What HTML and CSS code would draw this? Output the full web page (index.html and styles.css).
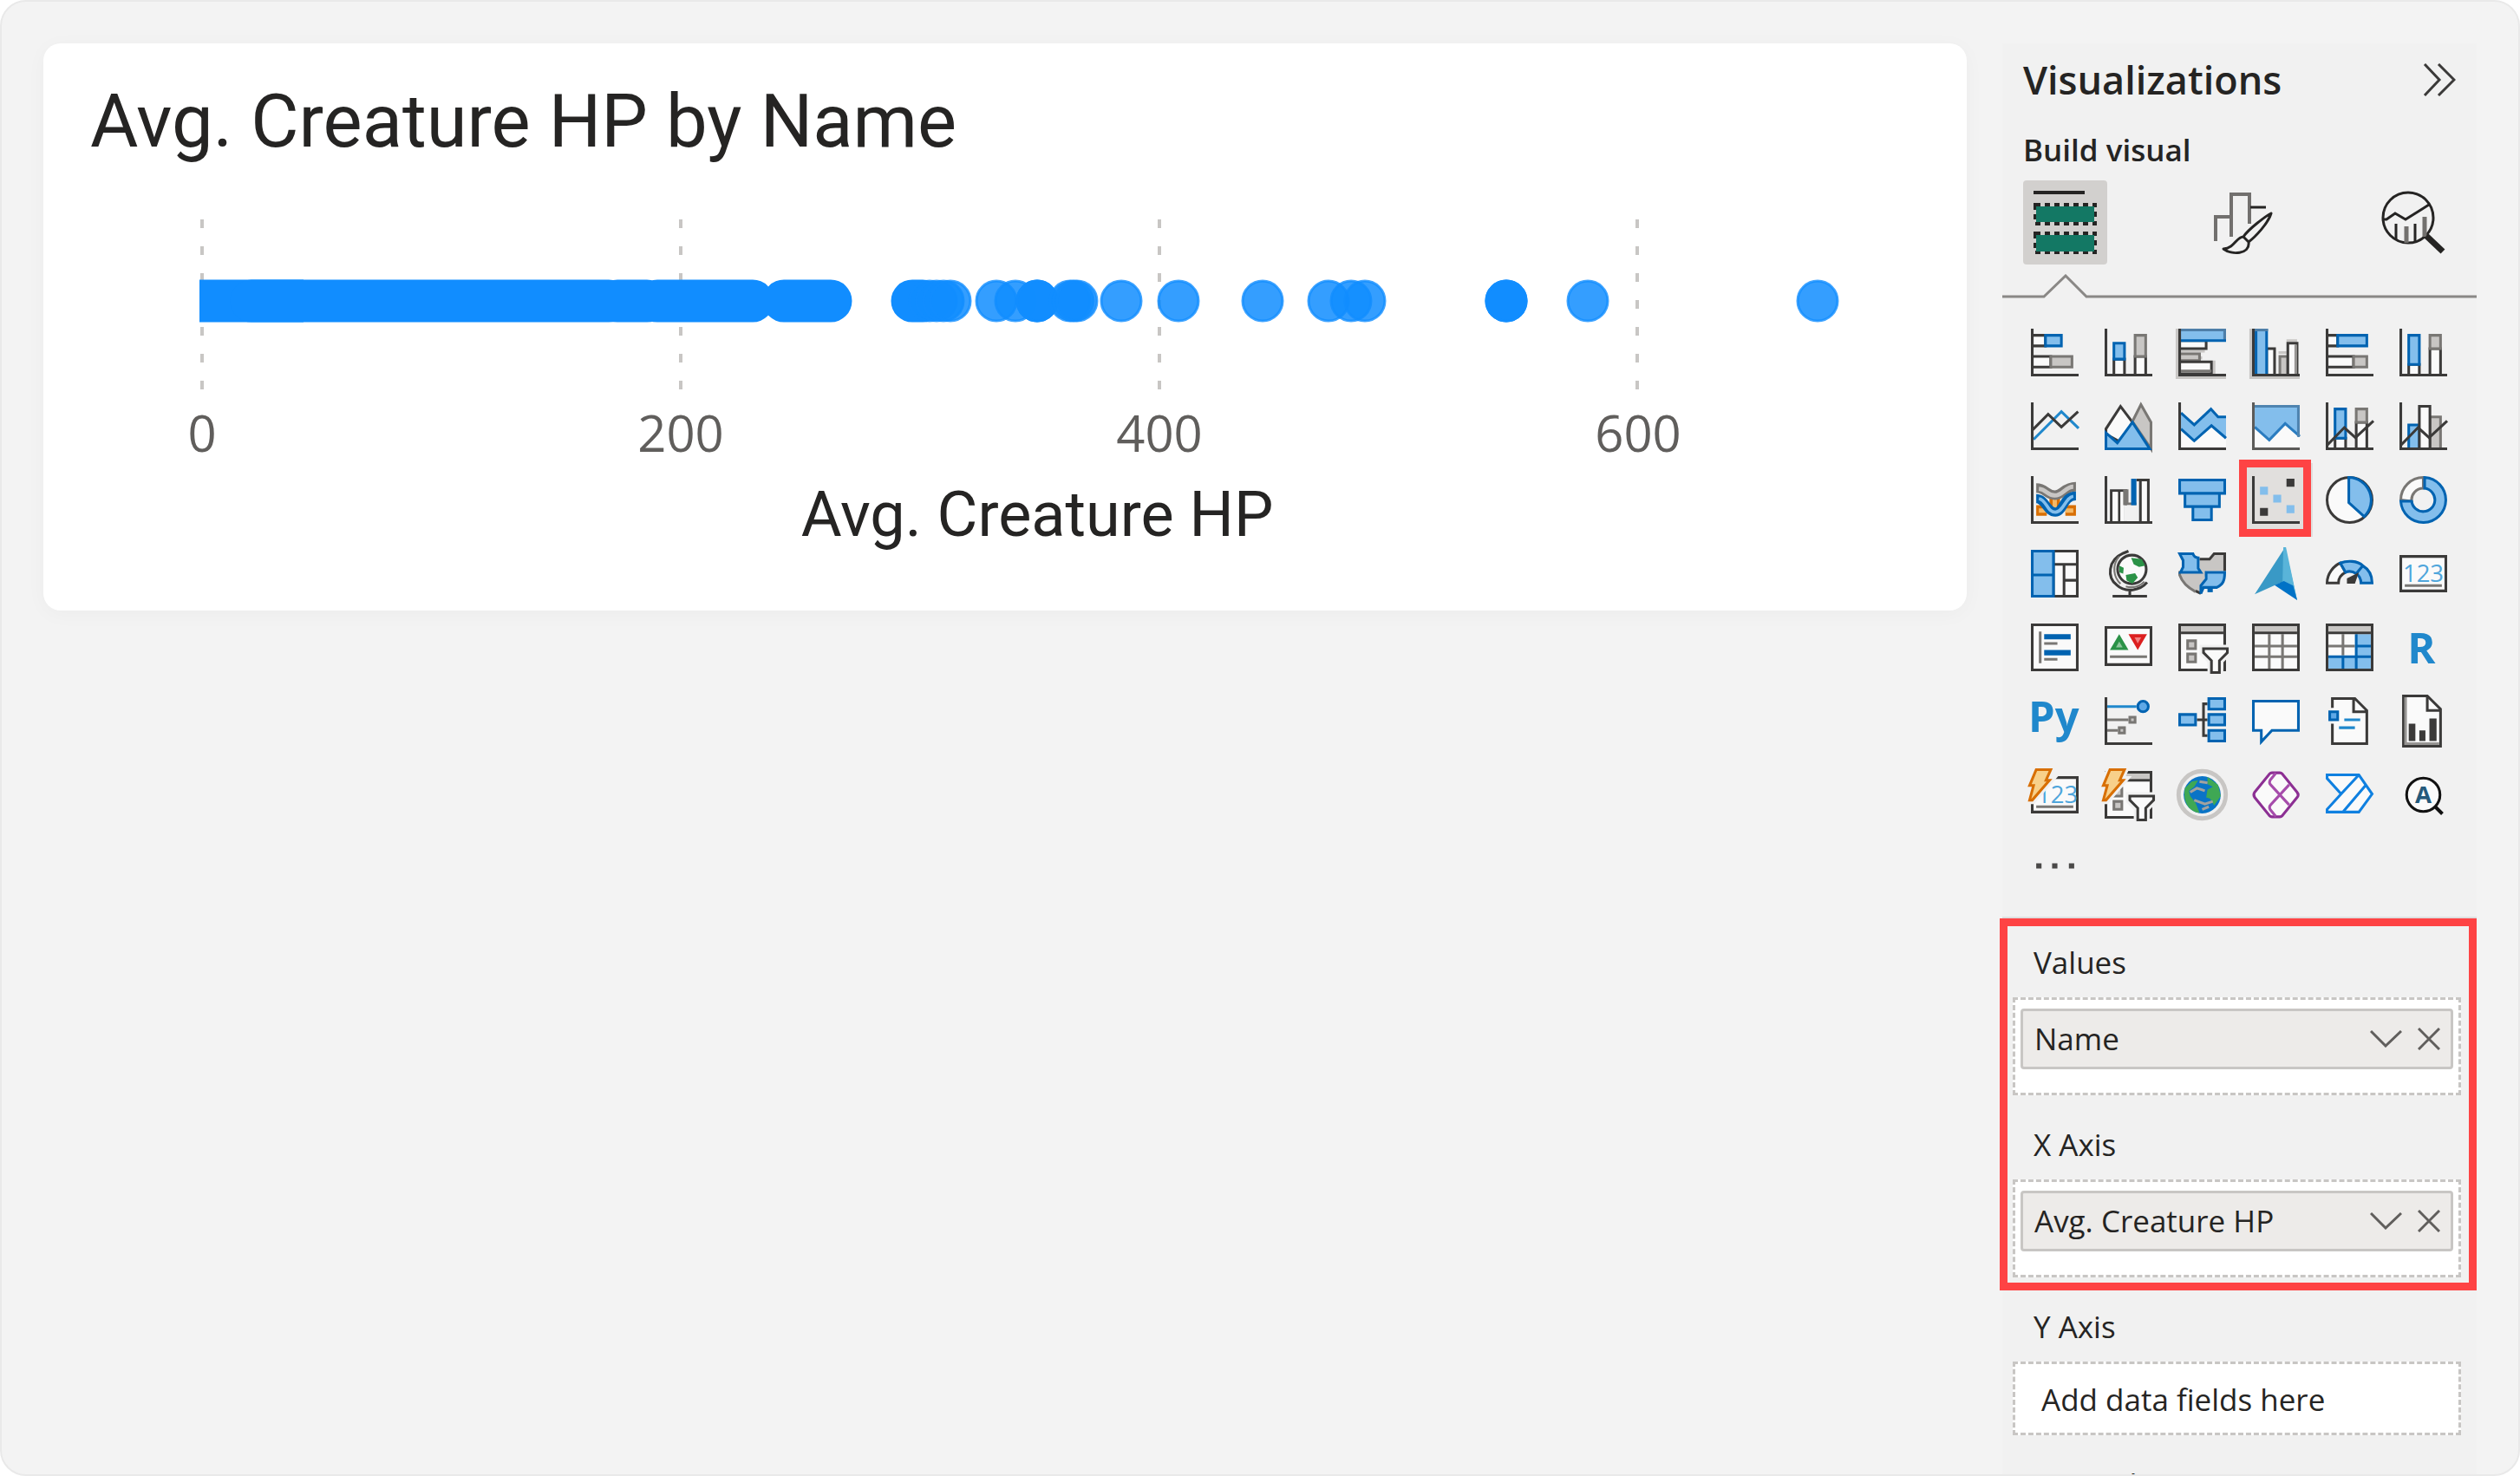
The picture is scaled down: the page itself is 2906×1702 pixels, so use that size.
FILE: index.html
```html
<!DOCTYPE html>
<html lang="en">
<head>
<meta charset="utf-8">
<title>Avg. Creature HP by Name</title>
<link rel="stylesheet" href="styles.css">
</head>
<body>
<div class="frame">
  <main class="card">
    <h1 class="card-title">Avg. Creature HP by Name</h1>
    <svg class="chart" viewBox="0 0 2218 450" role="img" aria-label="Scatter chart of Avg. Creature HP">
      <g class="grid-lines">
        <path d="M183 1V197M735 1V197M1287 1V197M1838 1V197"/>
      </g>
      <g class="band">
        <path class="flat" d="M180 95H300"/>
        <path d="M240 95H652M662 95H696M708 95H818M854 95H908M1002 95H1014"/>
      </g>
      <g class="dots">
        <circle cx="1022" cy="95" r="23"/><circle cx="1030" cy="95" r="23"/><circle cx="1038" cy="95" r="23"/><circle cx="1046" cy="95" r="23"/>
        <circle cx="1099" cy="95" r="23"/><circle cx="1121" cy="95" r="23"/>
        <circle cx="1146" cy="95" r="23"/><circle cx="1146" cy="95" r="23"/><circle cx="1146" cy="95" r="23"/>
        <circle cx="1184" cy="95" r="23"/><circle cx="1188" cy="95" r="23"/><circle cx="1192" cy="95" r="23"/>
        <circle cx="1243" cy="95" r="23"/><circle cx="1309" cy="95" r="23"/><circle cx="1406" cy="95" r="23"/>
        <circle cx="1482" cy="95" r="23"/><circle cx="1508" cy="95" r="23"/><circle cx="1524" cy="95" r="23"/>
        <circle cx="1687" cy="95" r="23"/><circle cx="1687" cy="95" r="23"/><circle cx="1687" cy="95" r="23"/>
        <circle cx="1781" cy="95" r="23"/><circle cx="2046" cy="95" r="23"/>
      </g>
      <g class="ticks">
        <text x="183" y="269">0</text><text x="735" y="269">200</text><text x="1287" y="269">400</text><text x="1839" y="269">600</text>
      </g>
      <text class="axis-title" x="1146" y="366">Avg. Creature HP</text>
    </svg>
  </main>

  <aside class="panel">
    <header class="panel-head">
      <h2 class="panel-title">Visualizations</h2>
      <button class="plain" aria-label="Collapse pane"><svg class="collapse" viewBox="0 0 38 38"><path d="M2 1L19 19L2 37M18 1L36 19L18 37"/></svg></button>
    </header>
    <h3 class="panel-sub">Build visual</h3>
    <nav class="tabs">
      <button class="tab selected" aria-label="Build visual">
        <svg viewBox="0 0 97 97"><path d="M12 14H71" stroke="#252423" stroke-width="4"/><path d="M14 28H83V50H14ZM14 61H83V83H14Z" fill="none" stroke="#252423" stroke-width="4" stroke-dasharray="6 5"/><path d="M15 30H82V48H15ZM15 63H82V82H15Z" fill="#137864"/></svg>
      </button>
      <button class="tab" aria-label="Format visual">
        <svg viewBox="-19 -14 97 97"><g fill="none" stroke="#72706e" stroke-width="4"><path d="M2 56V28H20M20 51V2H41V36"/></g><path d="M42 17H60" stroke="#252423" stroke-width="3"/><path d="M66 24C60 27 40 42 34 51L40 57C48 51 63 35 66 24ZM34 51C26 51 24 64 11 65C20 72 42 72 40 57Z" fill="#f1f1f1" stroke="#252423" stroke-width="3" stroke-linejoin="round"/></svg>
      </button>
      <button class="tab" aria-label="Analytics">
        <svg viewBox="-12 -12 97 97"><g fill="none" stroke="#252423" stroke-width="3"><circle cx="30" cy="31" r="29"/><path d="M2 33H5L15 26L27 33L54 16M16 38V56M38 38V58"/></g><path d="M28 41V60M49 30V53" stroke="#72706e" stroke-width="5"/><path d="M51 52L70 70" stroke="#252423" stroke-width="7"/></svg>
      </button>
    </nav>
    <svg class="notch" viewBox="0 0 547 28" aria-hidden="true"><path d="M0 26H48L73 2L97 26H547"/></svg>

    <div class="gallery">
      <button class="viz" aria-label="Stacked bar chart"><svg viewBox="0 0 18 18"><path class="w" d="M.5 2.5H5.5V6.5H.5ZM.5 10.5H7.5V14.5H.5Z"/><path class="b" d="M5.5 2.5H11.5V6.5H5.5Z"/><path class="g" d="M7.5 10.5H15.5V14.5H7.5Z"/><path class="d" d="M.5 0V17.5H18"/></svg></button>
      <button class="viz" aria-label="Stacked column chart"><svg viewBox="0 0 18 18"><path class="w" d="M3.5 11.5H7.5V17.5H3.5ZM11.5 10.5H15.5V17.5H11.5Z"/><path class="b" d="M3.5 5.5H7.5V11.5H3.5Z"/><path class="g" d="M11.5 2.5H15.5V10.5H11.5Z"/><path class="d" d="M.5 0V17.5H18"/></svg></button>
      <button class="viz" aria-label="Clustered bar chart"><svg viewBox="0 0 18 18"><path d="M-.5 0V18.5H18M1 8.5H10M1 11H9M13.5 12V18" fill="none" stroke="#c8c6c4"/><path class="w" d="M.5 4.5H10.5V7.5H.5Z"/><path class="g" d="M.5 9.5H8V12H.5Z"/><path class="w" d="M.5 12.5H12.5V17H.5Z"/><path d="M1 16H12.5" stroke="#797774"/><path class="b" d="M.5 .5H17.5V4.5H.5Z"/><path d="M0 .5H18M17.5 0V4" stroke="#4f7fa8" fill="none"/><path class="d" d="M.5 0V17.5H18"/></svg></button>
      <button class="viz" aria-label="Clustered column chart"><svg viewBox="0 0 18 18"><path d="M-.5 0V18.5H18M10 9H13M13 4.5H17" fill="none" stroke="#c8c6c4"/><path class="w" d="M5.5 7.5H8.5V17.5H5.5Z"/><path class="g" d="M10.5 10.5H13.5V17.5H10.5Z"/><path class="w" d="M13.5 5.5H17V17.5H13.5Z"/><path d="M16.5 6V17" stroke="#979593"/><path class="b" d="M1.5 .5H5.5V17.5H1.5Z"/><path d="M1 .5H6" stroke="#4f7fa8"/><path class="d" d="M.5 0V17.5H18"/></svg></button>
      <button class="viz" aria-label="100% stacked bar chart"><svg viewBox="0 0 18 18"><path class="w" d="M.5 2.5H4.5V6.5H.5ZM.5 10.5H10.5V14.5H.5Z"/><path class="b" d="M4.5 2.5H15.5V6.5H4.5Z"/><path class="g" d="M10.5 10.5H15.5V14.5H10.5Z"/><path class="d" d="M.5 0V17.5H18"/></svg></button>
      <button class="viz" aria-label="100% stacked column chart"><svg viewBox="0 0 18 18"><path class="w" d="M3.5 13.5H7.5V17.5H3.5ZM11.5 7.5H15.5V17.5H11.5Z"/><path class="b" d="M3.5 2.5H7.5V13.5H3.5Z"/><path class="g" d="M11.5 2.5H15.5V7.5H11.5Z"/><path class="d" d="M.5 0V17.5H18"/></svg></button>

      <button class="viz" aria-label="Line chart"><svg viewBox="0 0 18 18"><path d="M1 14L11.5 3.5L18 9.8" fill="none" stroke="#2088cc"/><path class="d" d="M.5 10.5L6.5 4.5L11.5 9.3L17.8 3.5M.5 0V17.5H18"/></svg></button>
      <button class="viz" aria-label="Area chart"><svg viewBox="0 0 18 18"><path class="w" d="M.5 12V10L6 1.5L10.5 7.5L6 15Z"/><path class="g" d="M10.5 7.2L13.7 .8L17.5 7.5V17.5Z"/><path class="b" d="M.5 11.5L4.8 15.3L10.5 7.5L17 17.5H.5Z"/></svg></button>
      <button class="viz" aria-label="Stacked area chart"><svg viewBox="0 0 18 18"><path d="M1 10L6 14.5L12.5 9L18 13.5V17H1Z" fill="#fafafa"/><path d="M1 4L6 8.5L12.3 2.5L15 5.5H18V13.5L12.5 8.8L6 14.5L1 10Z" fill="#83beec"/><path d="M1 4L6 8.5L12.3 2.5L15 5.5H18M18 13.5L12.5 8.8L6 14.5L1 10" fill="none" stroke="#0063b1"/><path class="d" d="M.5 0V17.5H18"/></svg></button>
      <button class="viz" aria-label="100% stacked area chart"><svg viewBox="0 0 18 18"><path d="M1 9H18V17H1Z" fill="#fafafa"/><path d="M1 1H18V13L12.5 8L6.5 14L1 9Z" fill="#83beec"/><path d="M1 9.3L6.5 14.2L12.5 8L18 12.8" fill="none" stroke="#2a7cc0"/><path d="M1 1.5H17.5V13" fill="none" stroke="#4f84b0"/><path d="M.5 0V17.5H18" fill="none" stroke="#5c5b59"/></svg></button>
      <button class="viz" aria-label="Line and stacked column chart"><svg viewBox="0 0 18 18"><path class="w" d="M3.5 13.5H7.5V17.5H3.5ZM11.5 7.5H15.5V17.5H11.5Z"/><path class="b" d="M3.5 2.5H7.5V13.5H3.5Z"/><path class="g" d="M11.5 2.5H15.5V7.5H11.5Z"/><path class="d" d="M.5 16.2L7 9.5L11.2 13.3L18 7M.5 0V17.5H18"/></svg></button>
      <button class="viz" aria-label="Line and clustered column chart"><svg viewBox="0 0 18 18"><path class="b" d="M3.5 8.5H7.5V17.5H3.5Z"/><path class="g" d="M11.5 5.5H15.5V17.5H11.5Z"/><path class="w" d="M7.5 1.5H11.5V17.5H7.5Z"/><path class="d" d="M.5 16.2L7 9.5L11.2 13.3L18 7M.5 0V17.5H18"/></svg></button>

      <button class="viz" aria-label="Ribbon chart"><svg viewBox="0 0 18 18"><g fill="none"><path d="M2 13H6M9 8V12M13 13H17" stroke="#d86f04" stroke-width="4"/><path d="M3 13H6M9 8V12M13 13H16" stroke="#f4b968" stroke-width="1.6"/><path d="M2 4.5C5.5 4.5 6 7.2 9 7.2S12.5 4 17 4" stroke="#797774" stroke-width="3.6"/><path d="M3 4.8C6 5 6 7.3 9 7.3S13 4 16 4" stroke="#c8c6c4" stroke-width="1.6"/><path d="M2 8.5C5.5 8.5 6 13.6 9.2 13.6S12 7.5 17 7.5" stroke="#0063b1" stroke-width="3.4"/><path d="M3 8.5C6 9 6 13.6 9.2 13.6S13 8 16 7.6" stroke="#83beec" stroke-width="1.2"/></g><path class="d" d="M.5 0V17.5H18"/></svg></button>
      <button class="viz" aria-label="Waterfall chart"><svg viewBox="0 0 18 18"><path class="w" d="M2.5 17.5V5.5H8V17.5M5.5 5.5V17.5M13.5 17.5V1.5H16.5V17.5M12 1.5H14"/><path d="M3 6H5V17H3ZM6 6H7V17H6Z" fill="#fafafa"/><path d="M7 5H9V10H12V11H7Z" fill="#797774"/><path d="M7.5 11H12V17H7.5Z" fill="#f1f1f1"/><path d="M10 1H12V11H10Z" fill="#0063b1"/><path class="d" d="M.5 0V17.5H18"/></svg></button>
      <button class="viz" aria-label="Funnel"><svg viewBox="0 0 18 18"><path class="b" d="M.5 1.5H17.5V6.5H.5ZM2.5 6.5H15.5V11.5H2.5ZM5.5 11.5H12.5V16.5H5.5Z"/></svg></button>
      <button class="viz chosen" aria-label="Scatter chart" aria-pressed="true"><svg viewBox="0 0 18 18"><path d="M3 4H6V7H3ZM8 7H11V10H8ZM13 11H16V14H13Z" fill="#83beec"/><path d="M13 1H16V4H13ZM3 12H6V15H3Z" fill="#3b3a39"/><path class="d" d="M.5 0V17.5H18"/></svg></button>
      <button class="viz" aria-label="Pie chart"><svg viewBox="0 0 18 18"><circle class="w" cx="9" cy="9" r="8.5"/><path class="b" d="M8.7 .5A8.6 8.6 0 0 1 14.5 15.3L8.7 10Z"/></svg></button>
      <button class="viz" aria-label="Donut chart"><svg viewBox="0 0 18 18"><path class="w l" d="M.5 9A8.5 8.5 0 0 1 9 .5V4.6A4.4 4.4 0 0 0 4.6 9.5Z"/><path class="b" d="M9.5 .5A8.5 8.5 0 1 1 .5 9.5H4.6A4.4 4.4 0 1 0 9.5 4.6Z"/></svg></button>

      <button class="viz" aria-label="Treemap"><svg viewBox="0 0 18 18"><path class="w" d="M8.5 .5H17.5V17.5H8.5ZM8.5 5.5H17.5M12.5 5.5V17.5M12.5 11.5H17.5"/><path class="b" d="M.5 .5H8.5V9.5H.5ZM.5 9.5H8.5V17.5H.5Z"/></svg></button>
      <button class="viz" aria-label="Map"><svg viewBox="0 0 18 18"><circle class="w" cx="10.3" cy="7.4" r="5.4"/><path d="M10 3L14 3.5L15.3 6L13 6.5L11 5.5ZM5.5 6L7.2 6.8L7 9L5.6 8.5ZM8 9.5L11.5 8.8L12.5 10.5L10.5 12.8L8.3 11.5Z" fill="#2b9247"/><path class="d" d="M9 .5L7 1.3C1 4 1 10.5 4.5 13.2C8 16.5 13.5 15.3 16 12.3M9.5 15V17.5M3 17.5H16"/><path d="M5.5 2.5C2.5 6 3.5 10.5 6 12.8M8 13.8C10.5 14.5 13 14 15 12" stroke="#797774" stroke-width=".7" fill="none"/></svg></button>
      <button class="viz" aria-label="Filled map"><svg viewBox="0 0 18 18"><path d="M8 3.5H11.8L13.5 1.5H17.5V8H10.5L8.5 16.5C5 16 .5 12 .5 8.5H8Z" fill="#c8c6c4"/><path class="d" d="M8 3.5H11.8L13.5 1.5H17.5V8M8.5 16.5L6.5 15.5"/><path d="M.5 8V9.5C1.5 12.5 4 14.5 6.5 15.8" fill="none" stroke="#797774"/><path class="b" d="M.5 1.5H5.5C6 3 7 3 7.5 3V7L8.5 8.5H.8L1.8 6.5V4Z"/><path class="b" d="M10.5 8.5H17.5C17.5 11.5 17 13 14.5 14.2H9.5L8.5 16.5V13.5L10.5 11Z"/><path d="M11 14.5H13V16H11Z" fill="#0063b1"/></svg></button>
      <button class="viz" aria-label="Azure map"><svg viewBox="0 0 18 18"><path d="M12.5 -1L1 16.8L10.5 12.5L17 19Z" fill="#3999c6"/><path d="M11.8 -1H12.8L17 19L11.5 13Z" fill="#59b4d9"/><path d="M8.5 13.3L12 11.8L15.5 13.5L17 19Z" fill="#0072c6"/></svg></button>
      <button class="viz" aria-label="Gauge"><svg viewBox="0 0 18 18"><path class="w" d="M.5 12.5C.5 9 3 6 5.5 5L7.5 8.5C5.5 9.5 4.8 11 4.8 12.5Z"/><path class="b" d="M5.5 5C8 4 12 4 14 6L11.5 9C10 8 8.5 8 7.5 8.5ZM14 6C16.5 7.5 17.5 10 17.5 12.5H13.3C13.3 11 12.5 9.5 11.5 9Z"/><path d="M12.5 8.5L11 12.8H8V10.8Z" fill="#3b3a39"/></svg></button>
      <button class="viz" aria-label="Card"><svg viewBox="0 0 18 18"><path class="w" d="M.5 2.5H17.5V15.5H.5Z"/><text class="num" x="9" y="12">123</text><path d="M2 13.5H16" stroke="#797774"/></svg></button>

      <button class="viz" aria-label="Multi-row card"><svg viewBox="0 0 18 18"><path class="w" d="M.5 .5H17.5V17.5H.5Z"/><path d="M3.5 3V15M5 7.5H10M5 13.5H10" stroke="#797774"/><path d="M5 4H15V6H5ZM5 10H15V12H5Z" fill="#0063b1"/></svg></button>
      <button class="viz" aria-label="KPI"><svg viewBox="0 0 18 18"><path class="w" d="M.5 1.5H17.5V15.5H.5Z"/><path d="M2 10L5.5 4L9 10Z" fill="#2b9247"/><path d="M4.3 9L5.5 6.8L6.8 9Z" fill="#8fc79d"/><path d="M9 4H16L12.5 10Z" fill="#dc1f1f"/><path d="M11.3 5.2H13.8L12.5 7.5Z" fill="#f08080"/><path d="M2 12.5H16" stroke="#797774"/></svg></button>
      <button class="viz" aria-label="Slicer"><svg viewBox="0 0 18 18"><path class="w" d="M.5 .5H17.5V17.5H.5Z"/><path d="M1 1H17V3H1Z" fill="#c8c6c4"/><path class="d" d="M1 3.5H17"/><path class="g" d="M3.5 6.5H6.5V9.5H3.5ZM3.5 11.5H6.5V14.5H3.5Z"/><path class="halo" d="M9.5 9.5H18.5V11L15.5 14V18.5H12.5V14L9.5 11Z"/><path class="w" d="M9.5 9.5H18.5V11L15.5 14V18.5H12.5V14L9.5 11Z"/></svg></button>
      <button class="viz" aria-label="Table"><svg viewBox="0 0 18 18"><path class="w" d="M.5 .5H17.5V17.5H.5Z"/><path d="M1 1H17V3H1Z" fill="#c8c6c4"/><path d="M6.5 4V17M11.5 4V17M1 8.5H17M1 12.5H17" stroke="#797774"/><path class="d" d="M1 3.5H17"/></svg></button>
      <button class="viz" aria-label="Matrix"><svg viewBox="0 0 18 18"><path class="w" d="M.5 .5H17.5V17.5H.5Z"/><path d="M1 1H17V3H1Z" fill="#c8c6c4"/><path d="M11.5 4H17V17H1V12.5H11.5Z" fill="#83beec"/><path d="M6.5 4V12M1 8.5H11" stroke="#797774"/><path d="M11.5 4V17M1 12.5H17M6.5 12.5V17M11.5 8.5H17" stroke="#0063b1"/><path class="d" d="M1 3.5H17"/></svg></button>
      <button class="viz" aria-label="R script visual"><svg viewBox="0 0 18 18"><text class="lang" x="3" y="15">R</text></svg></button>

      <button class="viz" aria-label="Python visual"><svg viewBox="0 0 18 18"><text class="lang" x="-1" y="13">Py</text></svg></button>
      <button class="viz" aria-label="Key influencers"><svg viewBox="0 0 18 18"><path d="M1 3.5H12" stroke="#2088cc"/><circle cx="14.5" cy="3.5" r="2" fill="#5fa8e6" stroke="#0063b1"/><path d="M1 8.5H9M1 12.5H5" stroke="#797774"/><path d="M9.5 7.5H11.5V9.5H9.5ZM5.5 11.5H7.5V13.5H5.5Z" fill="#c8c6c4" stroke="#797774"/><path class="d" d="M.5 0V17.5H18"/></svg></button>
      <button class="viz" aria-label="Decomposition tree"><svg viewBox="0 0 18 18"><path class="d" d="M7 8.5H11M11 2.5H9.5V14.5H11"/><path class="b" d="M.5 6.5H6.5V10.5H.5ZM11.5 .5H17.5V4.5H11.5ZM11.5 6.5H17.5V10.5H11.5ZM11.5 12.5H17.5V16.5H11.5Z"/></svg></button>
      <button class="viz" aria-label="Q&amp;A"><svg viewBox="0 0 18 18"><path d="M.5 1.5H17.5V12.5H7.5L3.5 16.8V12.5H.5Z" fill="#fafafa" stroke="#0063b1"/></svg></button>
      <button class="viz" aria-label="Smart narrative"><svg viewBox="0 0 18 18"><path d="M2.5 .5H11L15.5 5V17.5H2.5Z" fill="#fafafa"/><path class="d" d="M2.5 4V.5H11L15.5 5V17.5H2.5V10M10.5 .5V5.5H15.5"/><path d="M1.5 5.5H4.5V8.5H1.5Z" fill="#5fa8e6" stroke="#0063b1"/><path d="M7 8.5H13M5 11.5H11" stroke="#2088cc"/></svg></button>
      <button class="viz" aria-label="Paginated report"><svg viewBox="0 0 18 18"><path class="w" d="M1.5 -.5H10.5L15.5 4.5V18.5H1.5Z"/><path class="d" d="M10.5 -.5V5H15.5"/><path d="M2.3 0V18M2 17.5H15" stroke="#979593"/><path d="M3.5 10H6V16.5H3.5ZM7.5 12.5H9.8V16.5H7.5ZM11.3 8H14V16.5H11.3Z" fill="#3b3a39"/></svg></button>

      <button class="viz" aria-label="Card (new)"><svg viewBox="0 0 18 18"><path class="w" d="M.5 2.5H17.5V15.5H.5Z"/><text class="num" x="10" y="12">123</text><path d="M2 13.5H16" stroke="#797774"/><path class="halo" d="M2 -.5H7.5L5.7 3.5H7L.5 11H-.5L1 5.5H-.5Z"/><path class="bolt" d="M2 -.5H7.5L5.7 3.5H7L.5 11H-.5L1 5.5H-.5Z"/></svg></button>
      <button class="viz" aria-label="Slicer (new)"><svg viewBox="0 0 18 18"><path class="w" d="M.5 .5H17.5V17.5H.5Z"/><path d="M1 1H17V3H1Z" fill="#c8c6c4"/><path class="d" d="M1 3.5H17"/><path class="g" d="M3.5 6.5H6.5V9.5H3.5ZM3.5 11.5H6.5V14.5H3.5Z"/><path class="halo" d="M9.5 9.5H18.5V11L15.5 14V18.5H12.5V14L9.5 11ZM2 -.5H7.5L5.7 3.5H7L.5 11H-.5L1 5.5H-.5Z"/><path class="w" d="M9.5 9.5H18.5V11L15.5 14V18.5H12.5V14L9.5 11Z"/><path class="bolt" d="M2 -.5H7.5L5.7 3.5H7L.5 11H-.5L1 5.5H-.5Z"/></svg></button>
      <button class="viz" aria-label="ArcGIS Maps"><svg viewBox="0 0 18 18"><circle cx="9" cy="9" r="8.9" fill="#f1f1f1" stroke="#c8c6c4" stroke-width="1.6"/><circle cx="9" cy="9" r="7" fill="#0a74c6"/><path d="M2.5 6.5L5 4L7.5 3.5L6 6L4 7.5L4.5 9.5L6.5 12L8 15.8C4 15.5 1.5 11.5 2.5 6.5ZM11 2.3L15 5.2L16 9.5L13.5 13L12 10.5L10.5 10L11 7L13 6L11 5Z" fill="#3fa854"/><path d="M4.5 8L7 6.5L10 7.5M6 11L10 12.5L13 11.5M8 4L11 4.5M9 14.5L11.5 13.5" stroke="#a3a29f" fill="none"/></svg></button>
      <button class="viz" aria-label="Power Apps"><svg viewBox="0 0 18 18"><g fill="#fafafa" stroke="#8c2f93"><path d="M7.5 .7H10.5Q11 .7 11.5 1.2L17 8Q17.8 9 17 10L11.5 16.8Q11 17.3 10.5 17.3H7.5Q7 17.3 6.5 16.8L1 10Q.3 9 1 8L6.5 1.2Q7 .7 7.5 .7Z"/><path d="M9 .8L6.8 3.5Q6.3 4.5 7 5.2L14 12.8M9 17.2L6.8 14.5Q6.3 13.5 7 12.8L14 5.2" fill="none" stroke="#a64cab"/></g></svg></button>
      <button class="viz" aria-label="Power Automate"><svg viewBox="0 0 18 18"><path d="M.5 1.5H12.5L17.5 8.7L12.5 15.5H.5V14.5L5.8 8.7L.5 2.8ZM5.8 8.7L12.5 1.5M6.5 15.5L15 5.5" fill="#fafafa" stroke="#0f80e0"/></svg></button>
      <button class="viz" aria-label="AppSource visual"><svg viewBox="0 0 18 18"><circle cx="9" cy="9" r="6.3" fill="#fafafa" stroke="#111"/><path d="M13.5 13.5L16.2 16.2" stroke="#111" stroke-width="1.3"/><text class="badge" x="9" y="12">A</text></svg></button>
      <button class="viz more" aria-label="More visuals"><svg viewBox="0 0 54 54"><path d="M6 24H12V30H6ZM24 24H30V30H24ZM43 24H49V30H43Z" fill="#4a4948"/></svg></button>
    </div>

    <div class="callout">
      <section>
        <h4 class="label">Values</h4>
        <div class="well">
          <div class="chip"><span class="chip-name">Name</span>
            <button class="plain" aria-label="Field options"><svg class="chev" viewBox="0 0 37 20"><path d="M1 1L18 18L36 1"/></svg></button>
            <button class="plain" aria-label="Remove field"><svg class="cross" viewBox="0 0 26 26"><path d="M1 1L25 25M25 1L1 25"/></svg></button>
          </div>
        </div>
      </section>
      <section class="next">
        <h4 class="label">X Axis</h4>
        <div class="well">
          <div class="chip"><span class="chip-name">Avg. Creature HP</span>
            <button class="plain" aria-label="Field options"><svg class="chev" viewBox="0 0 37 20"><path d="M1 1L18 18L36 1"/></svg></button>
            <button class="plain" aria-label="Remove field"><svg class="cross" viewBox="0 0 26 26"><path d="M1 1L25 25M25 1L1 25"/></svg></button>
          </div>
        </div>
      </section>
    </div>
    <div class="fields">
      <section>
        <h4 class="label">Y Axis</h4>
        <div class="well empty">Add data fields here</div>
      </section>
      <section class="next">
        <h4 class="label">Legend</h4>
      </section>
    </div>
  </aside>
</div>
</body>
</html>
```
FILE: styles.css
```css
* { box-sizing: border-box; }
body { margin: 0; background: #fff; color: #252423; font-family: "Open Sans", "Noto Sans", sans-serif; }
h1, h2, h3, h4 { margin: 0; font-weight: 400; }
button { font: inherit; color: inherit; border: 0; background: none; padding: 0; }
svg { display: block; }

.frame {
  height: 100vh;
  overflow: hidden;
  display: flex;
  align-items: flex-start;
  gap: 41px;
  padding: 48px 48px 0;
  border: 2px solid #e9e9e9;
  border-radius: 30px;
  background: #f3f3f3;
}

/* report canvas */
.card {
  flex: 1;
  min-width: 0;
  padding: 36px 0 2px;
  border-radius: 20px;
  background: #fff;
  box-shadow: 0 4px 24px rgba(0, 0, 0, .03);
}
.card-title { padding-left: 54px; font-family: Roboto, sans-serif; font-size: 85px; line-height: 108px; }
.chart { width: 100%; margin-top: 58px; overflow: visible; }
.grid-lines path { stroke: #c8c6c4; stroke-width: 4; stroke-dasharray: 10 21; fill: none; }
.band path { stroke: #118dff; stroke-width: 49; stroke-linecap: round; fill: none; }
.band .flat { stroke-linecap: butt; }
.dots circle { fill: #118dff; fill-opacity: .85; stroke: #118dff; stroke-width: 3; stroke-opacity: .8; }
.ticks text { font-size: 58px; text-anchor: middle; fill: #605e5c; }
.axis-title { font-family: Roboto, sans-serif; font-size: 72px; text-anchor: middle; fill: #252423; }

/* visualizations pane */
.panel { flex: none; width: 547px; background: #f1f1f1; }
.panel-head { display: flex; align-items: center; justify-content: space-between; padding: 10px 24px 0; }
.panel-title { font-size: 45px; line-height: 64px; font-weight: 600; }
.collapse { width: 38px; height: 38px; fill: none; stroke: #3b3a39; stroke-width: 3; }
.panel-sub { padding: 24px 24px 0; font-size: 35px; line-height: 50px; font-weight: 600; }
.tabs { display: flex; justify-content: space-between; padding: 10px 24px 0; }
.tab { width: 97px; height: 97px; border-radius: 4px; }
.tab svg { width: 97px; height: 97px; }
.tab.selected { background: #d2d0ce; }
.notch { width: 547px; height: 28px; margin-top: 11px; fill: none; stroke: #8a8886; stroke-width: 3; }

.gallery { display: grid; grid-template-columns: repeat(6, 85px); grid-auto-rows: 85px; padding: 20px 0 0 18px; height: 715px; border-bottom: 2px solid #dedede; }
.viz { position: relative; display: flex; align-items: center; justify-content: center; }
.viz svg { position: relative; width: 55px; height: 55px; overflow: visible; stroke-width: 1; }
.more { padding-bottom: 6px; }
.chosen { background: #e1dfdd; }
.chosen::after { content: ""; position: absolute; inset: -4px 2px 0 0; border: 9px solid #fe4344; }
.w { fill: #fafafa; stroke: #3b3a39; }
.l { stroke: #797774; }
.d { fill: none; stroke: #3b3a39; }
.b { fill: #83beec; stroke: #0063b1; }
.g { fill: #c8c6c4; stroke: #797774; }
.halo { fill: #f1f1f1; stroke: #f1f1f1; stroke-width: 3; }
.bolt { fill: #f8d08a; stroke: #d86f04; }
.num { font-size: 9px; text-anchor: middle; fill: #4fa6dc; }
.lang { font-size: 16px; font-weight: 700; fill: #2088cc; }
.badge { font-size: 9px; font-weight: 700; text-anchor: middle; fill: #24597b; }

/* field wells */
.callout { margin-left: -3px; padding: 0 9px 6px 6px; border: 9px solid #fe4344; }
.fields { padding: 0 18px 0 12px; }
.next { padding-top: 15px; }
.label { padding: 16px 0 14px 24px; font-size: 35px; line-height: 52px; }
.well { height: 113px; padding: 10px 6px; border: 3px dashed #c8c6c4; background: #fff; }
.chip { display: flex; align-items: center; gap: 18px; height: 70px; padding: 0 12px 0 13px; border: 3px solid #c8c6c4; border-radius: 4px; background: #edebe9; }
.chip-name { flex: 1; font-size: 35px; line-height: 52px; }
.chev { width: 37px; height: 20px; fill: none; stroke: #605e5c; stroke-width: 3; }
.cross { width: 26px; height: 26px; fill: none; stroke: #605e5c; stroke-width: 3; }
.well.empty { height: 85px; padding: 15px 30px; font-size: 35px; line-height: 52px; }
```
